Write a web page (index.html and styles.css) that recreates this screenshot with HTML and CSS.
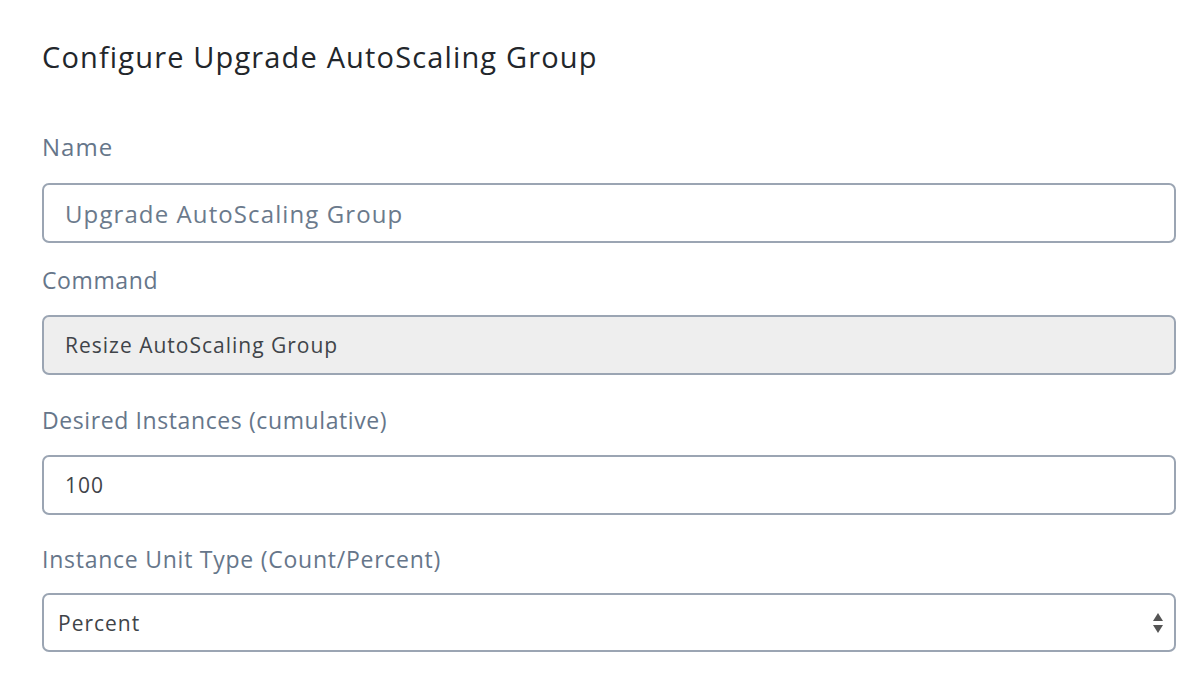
FILE: index.html
```html
<!DOCTYPE html>
<html>
<head>
<meta charset="utf-8">
<link rel="stylesheet" href="styles.css">
</head>
<body>
<div class="panel">
  <h1 class="title">Configure Upgrade AutoScaling Group</h1>
  <div class="field field-first">
    <div class="label">Name</div>
    <div class="input input-name">Upgrade AutoScaling Group</div>
  </div>
  <div class="field field-second">
    <div class="label">Command</div>
    <div class="input input-disabled">Resize AutoScaling Group</div>
  </div>
  <div class="field">
    <div class="label">Desired Instances (cumulative)</div>
    <div class="input input-value">100</div>
  </div>
  <div class="field field-last">
    <div class="label">Instance Unit Type (Count/Percent)</div>
    <div class="input select">
      <span class="select-text">Percent</span>
      <svg class="arrows" width="12" height="22" viewBox="0 0 12 22"><path d="M6 1 L11 9 L1 9 Z" fill="#555"/><path d="M1 13 L11 13 L6 21 Z" fill="#555"/></svg>
    </div>
  </div>
</div>
</body>
</html>
```
FILE: styles.css
```css
html, body {
  margin: 0;
  padding: 0;
  background: #ffffff;
}
body {
  font-family: "Open Sans", Lato, sans-serif;
}
.panel {
  width: 1134px;
  padding: 36px 0 0 42px;
  box-sizing: content-box;
}
.title {
  margin: 0;
  font-size: 29px;
  font-weight: 400;
  color: #22262b;
  line-height: 42px;
  letter-spacing: 1.15px;
}
.field {
  display: flex;
  flex-direction: column;
  margin-top: 30px;
}
.field-first {
  margin-top: 54px;
}
.field-second {
  margin-top: 22px;
}
.field-last {
  margin-top: 29px;
}
.label {
  font-size: 23px;
  color: #66768a;
  line-height: 30px;
  margin-bottom: 20px;
  letter-spacing: 0.6px;
}
.field-first .label {
  font-size: 24px;
  margin-bottom: 21px;
  letter-spacing: 1px;
}
.field-last .label {
  letter-spacing: 0.75px;
  margin-bottom: 19px;
}
.input {
  height: 60px;
  box-sizing: border-box;
  border: 2px solid #9ba5b3;
  border-radius: 7px;
  display: flex;
  align-items: center;
  padding-left: 21px;
  font-size: 21px;
  color: #3f4449;
  letter-spacing: 1px;
}
.input-name {
  font-size: 24px;
  color: #6b7a8c;
  letter-spacing: 1.1px;
}
.input-disabled {
  background: #eeeeee;
}
.select {
  height: 59px;
  padding-left: 14px;
  padding-right: 10px;
  justify-content: space-between;
}
.arrows {
  display: block;
}
```
